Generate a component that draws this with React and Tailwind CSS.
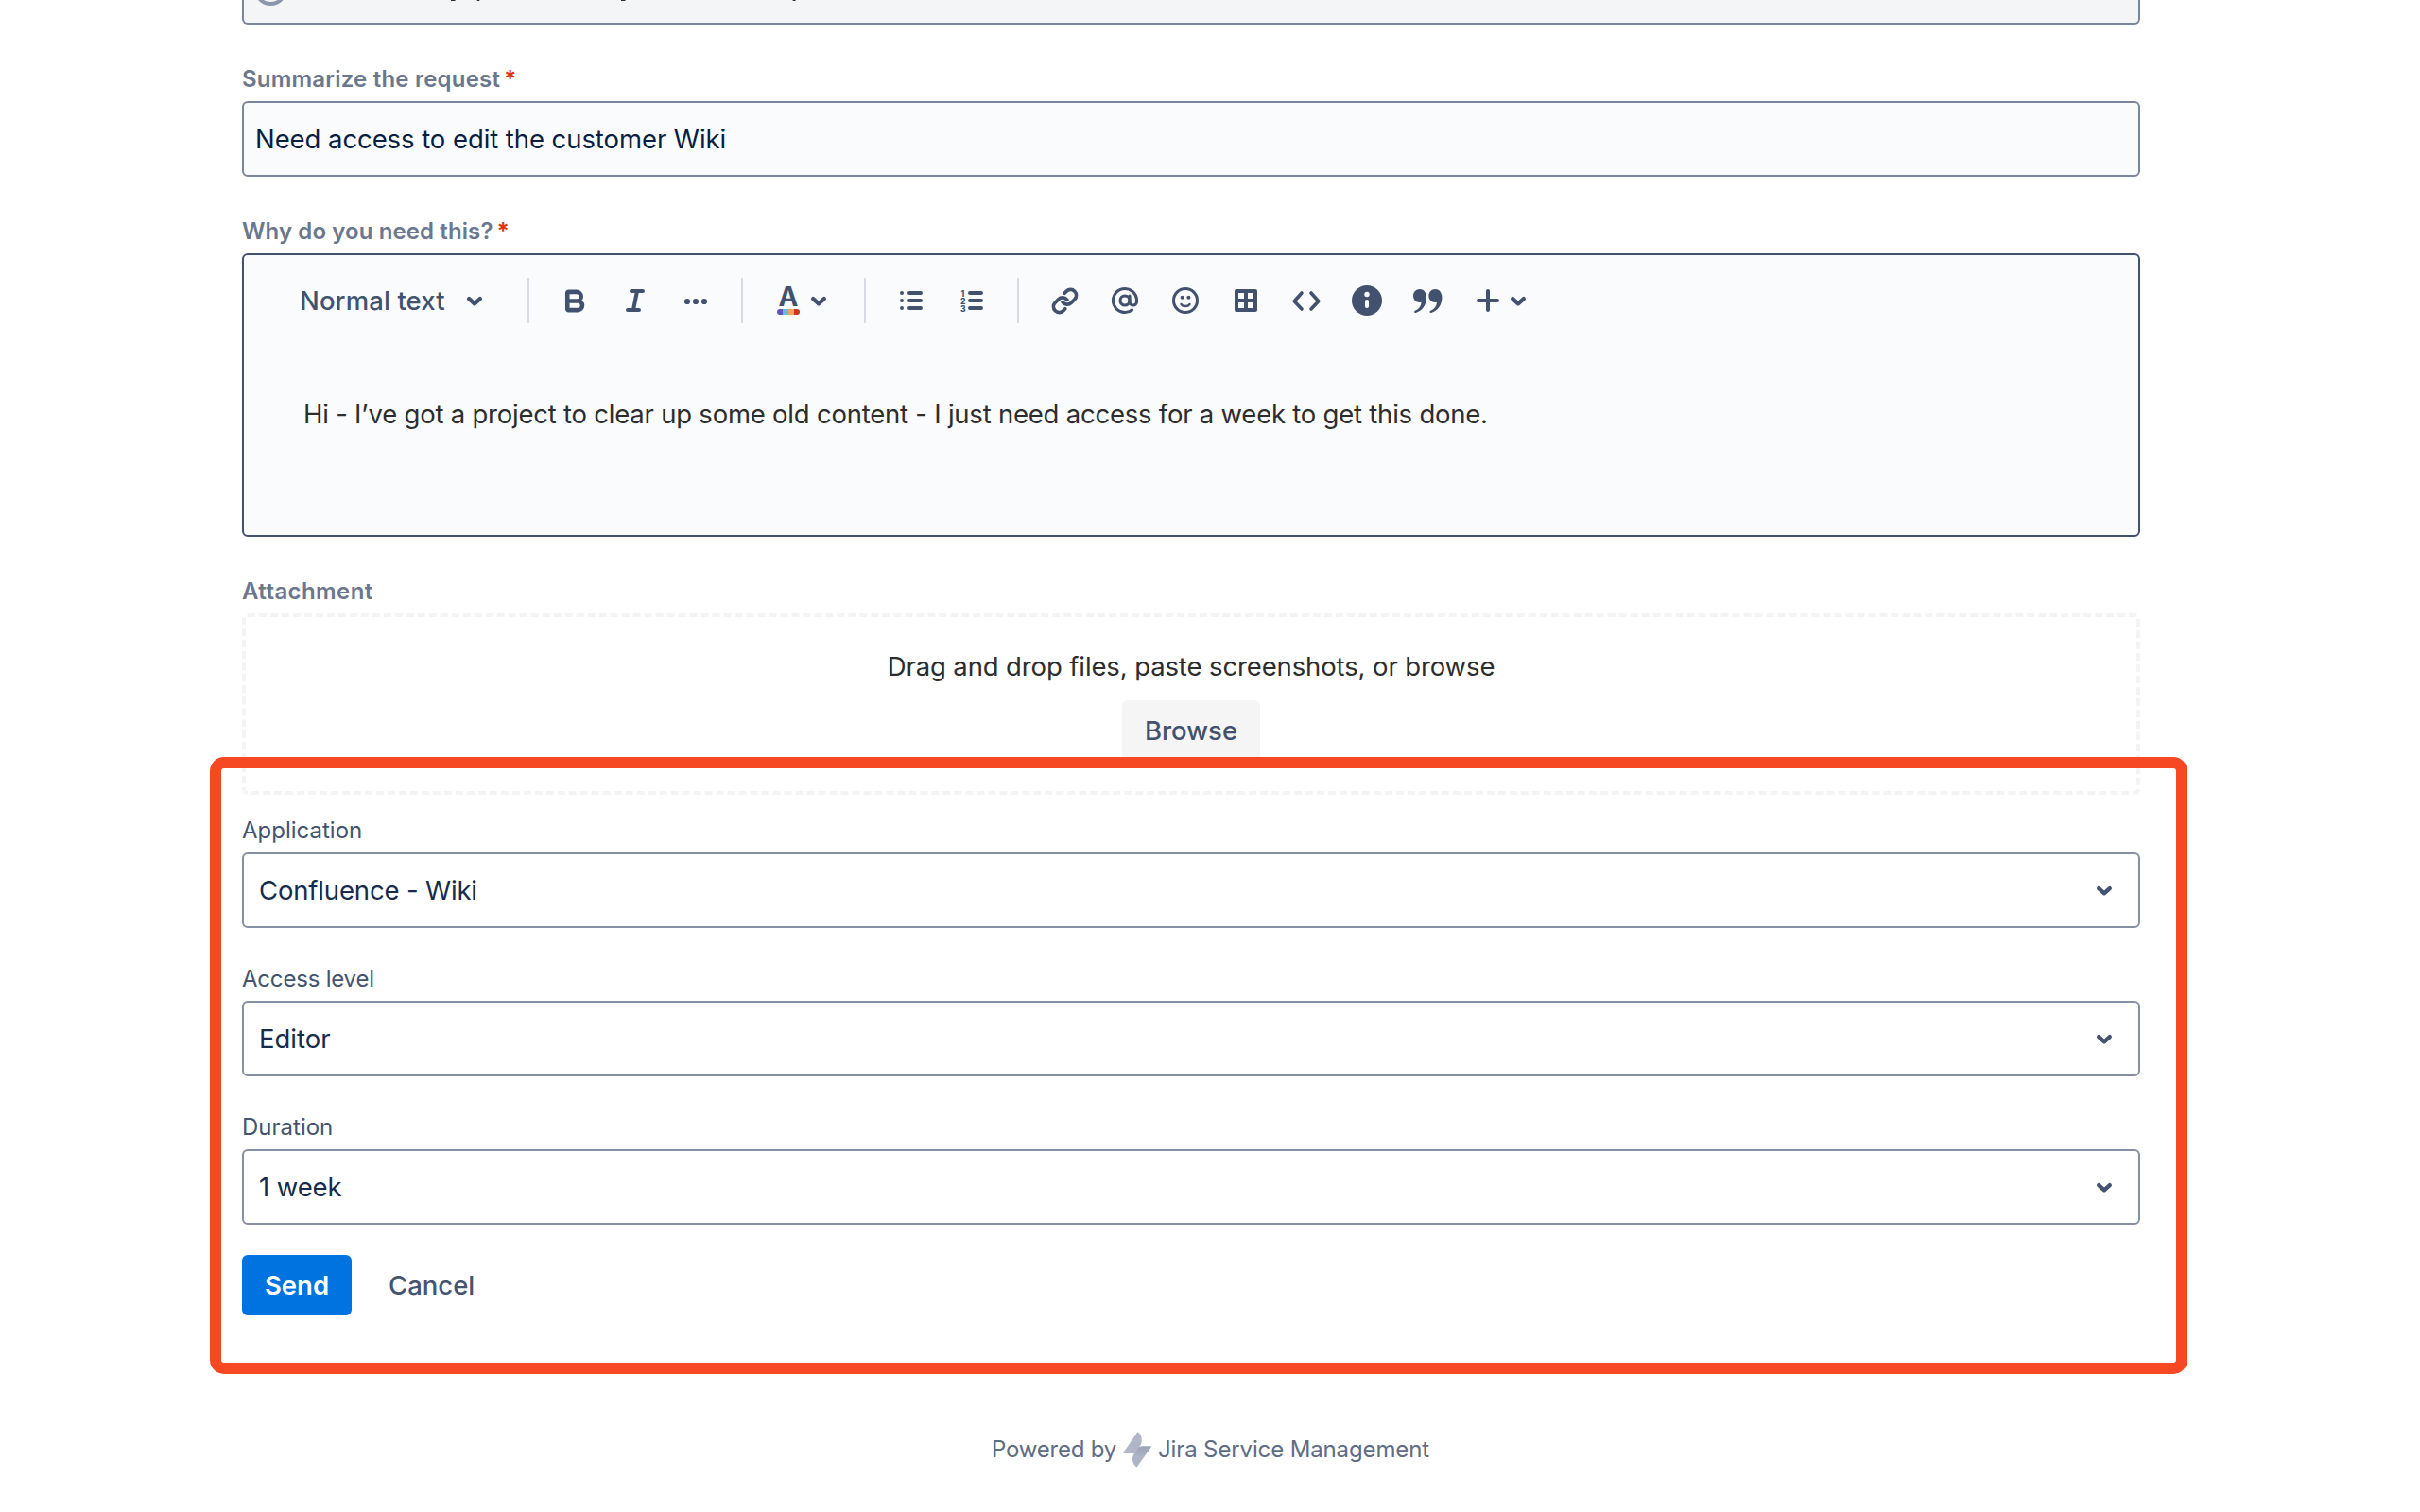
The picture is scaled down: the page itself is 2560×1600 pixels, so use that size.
import React from 'react';
import { AtSign, Bold, Link } from 'lucide-react';

const selects = [
  { label: 'Application', value: 'Confluence - Wiki', className: 'pt-5', labelClass: '', valueClass: 'tracking-[-0.16px]' },
  { label: 'Access level', value: 'Editor', className: 'pt-9', labelClass: 'tracking-[-0.2px]', valueClass: '' },
  { label: 'Duration', value: '1 week', className: 'pt-9', labelClass: '', valueClass: 'tracking-[-0.1px]' },
];

const Chevron = () => (
  <svg className="w-8 h-8 shrink-0" viewBox="0 0 32 32" fill="none" stroke="currentColor" strokeWidth="4.4" strokeLinecap="round" strokeLinejoin="round">
    <path d="M10.2 14.2l5.8 5.1 5.8-5.1" />
  </svg>
);

const Icon = ({ children }) => (
  <svg className="w-12 h-12" viewBox="0 0 48 48" fill="none" stroke="currentColor" strokeWidth="4" strokeLinecap="round" strokeLinejoin="round">
    {children}
  </svg>
);

const Tool = ({ children }) => (
  <button className="w-16 h-16 shrink-0 flex items-center justify-center">{children}</button>
);

const Divider = () => <div className="w-0.5 h-12 mx-4 shrink-0 bg-[#d9dbe2]" />;

const FieldLabel = ({ children, required }) => (
  <label className="flex pt-[39px] pb-[5px] text-2xl leading-[37px] font-semibold text-[#6b778c]">
    {children}
    {required && <span className="ml-1 font-bold text-[#de350b]">*</span>}
  </label>
);

const Toolbar = () => (
  <div className="flex items-center h-24 pl-[46px] text-[#42526e]">
    <button className="flex items-center justify-between w-[238px] pl-[13px] pr-6 text-[27.5px] font-medium tracking-[0.1px]">
      <span className="pt-px">Normal text</span>
      <Chevron />
    </button>
    <Divider />
    <Tool><Bold className="mr-0.5" size={29} strokeWidth={3.8} /></Tool>
    <Tool>
      <Icon><path d="M20 14h12M16 34h12M26 14l-4 20" /></Icon>
    </Tool>
    <Tool>
      <Icon>
        <g fill="currentColor" stroke="none">
          <circle cx="15" cy="25" r="3.1" />
          <circle cx="24" cy="25" r="3.1" />
          <circle cx="33" cy="25" r="3.1" />
        </g>
      </Icon>
    </Tool>
    <Divider />
    <div className="flex items-center w-24">
      <Tool>
        <span className="flex flex-col items-center pt-px">
          <span className="text-[28px] leading-[20px] pb-[3px] font-bold">A</span>
          <span className="flex w-6 h-1.5 rounded-full overflow-hidden">
            <span className="flex-1 bg-[#6554c0]" />
            <span className="flex-1 bg-[#60bfdc]" />
            <span className="flex-1 bg-[#faa05f]" />
            <span className="flex-1 bg-[#ca3521]" />
          </span>
        </span>
      </Tool>
      <span className="-ml-4"><Chevron /></span>
    </div>
    <Divider />
    <Tool>
      <Icon>
        <path d="M22 16h12M22 24h12M22 32h12" />
        <path d="M14 16h.01M14 24h.01M14 32h.01" />
      </Icon>
    </Tool>
    <Tool>
      <Icon>
        <path d="M22 16h12M22 24h12M22 32h12" />
        <g fill="currentColor" stroke="none" fontSize="8.5" fontWeight="800">
          <text x="12.5" y="20">1</text>
          <text x="12" y="28">2</text>
          <text x="12" y="36">3</text>
        </g>
      </Icon>
    </Tool>
    <Divider />
    <Tool><Link size={29} strokeWidth={3.1} /></Tool>
    <Tool><AtSign size={30} strokeWidth={2.5} /></Tool>
    <Tool>
      <Icon>
        <circle cx="24" cy="24" r="12.5" strokeWidth="3" />
        <path d="M19.5 28c2 2.7 7 2.7 9 0" strokeWidth="2.4" />
        <g fill="currentColor" stroke="none">
          <circle cx="20.6" cy="20.8" r="2" />
          <circle cx="27.4" cy="20.8" r="2" />
        </g>
      </Icon>
    </Tool>
    <Tool>
      <Icon>
        <path d="M14 14h20v20H14zM24 14v20M14 24h20" />
      </Icon>
    </Tool>
    <Tool>
      <Icon>
        <path d="M19 16l-7.8 8.8 7.8 8.2M29 16l7.8 8.8-7.8 8.2" strokeWidth="3.6" />
      </Icon>
    </Tool>
    <Tool>
      <Icon>
        <circle cx="24" cy="24" r="16" fill="currentColor" stroke="none" />
        <path d="M24 25v5" stroke="#fafbfd" strokeWidth="4" />
        <circle cx="24" cy="17.500" r="2.7" fill="#fafbfd" stroke="none" />
      </Icon>
    </Tool>
    {/* closing quote marks: round head with a thin tail */}
    <Tool>
      <Icon>
        <g fill="currentColor" stroke="none">
          <path d="M15.800 12c4.200 0 7.200 3.400 7.200 8.800 0 8-4.800 14.400-11.300 16.200-1.700.5-2.300-1.500-.7-2.200 4-1.800 6.300-5 6.600-9.100-.7.200-1.300.300-2 .300-3.700 0-6.600-2.900-6.600-6.900 0-4.100 2.900-7.100 6.800-7.100z" />
          <path transform="translate(16.400 0)" d="M15.800 12c4.200 0 7.200 3.400 7.200 8.800 0 8-4.800 14.400-11.300 16.200-1.700.5-2.300-1.500-.7-2.200 4-1.800 6.300-5 6.600-9.100-.7.200-1.300.300-2 .300-3.700 0-6.600-2.900-6.600-6.900 0-4.100 2.900-7.100 6.800-7.100z" />
        </g>
      </Icon>
    </Tool>
    <div className="flex items-center w-24">
      <Tool>
        <Icon><path d="M24 14v20M14 24h20" /></Icon>
      </Tool>
      <span className="-ml-4"><Chevron /></span>
    </div>
  </div>
);

const SelectField = ({ label, value, className, labelClass, valueClass }) => (
  <div className={className}>
    <label className={`block pb-[5px] text-2xl leading-9 text-[#44546f] ${labelClass}`}>{label}</label>
    <div className="flex items-center justify-between h-20 pl-4 pr-5 border-2 border-[#8590a2] rounded-md bg-white text-[#172b4d]">
      <span className={`pt-px text-[27.5px] ${valueClass}`}>{value}</span>
      <span className="text-[#44546f]"><Chevron /></span>
    </div>
  </div>
);

const Logo = () => (
  <svg className="w-[30px] h-[38px]" viewBox="0 0 30 38">
    <defs>
      <linearGradient id="bolt" x1="0" y1="0" x2="0" y2="1">
        <stop offset="0" stopColor="#9ba4b5" />
        <stop offset="0.5" stopColor="#adb4c3" />
      </linearGradient>
    </defs>
    <path fill="#b0b6c5" d="M15 .8Q16 0 16.700 1C20 4.500 21 10 18 15l-6 8H1Q-.3 23 .6 21.700z" />
    <path fill="url(#bolt)" d="M20.500 15.300H29q1.400 0 .6 1.300L15 37q-1 .8-1.700-.4C9.500 33 9 27.500 12 23l3-4.700q2-3 5.500-3z" />
  </svg>
);

export default function App() {
  return (
    <div className="relative w-[2560px] h-[1600px] overflow-hidden bg-white font-['Inter',sans-serif]">
      <main className="w-[2008px] ml-64">
        <div className="h-[26px] overflow-hidden border-2 border-t-0 border-[#7a869a] rounded-b-md bg-[#f4f5f7]">
          <svg className="w-[600px] h-6" viewBox="258 0 600 24">
            <circle cx="286.300" cy="-12" r="16" fill="none" stroke="#8c96ab" strokeWidth="3.800" />
            <path d="M477 0h4.500v1H477zM504.700 0h2.600v1h-2.600zM657 0h4.500v1H657zM838.700 0h2.800v1h-2.800z" fill="#2d2d31" />
          </svg>
        </div>

        <FieldLabel required><span className="tracking-[0.2px]">Summarize the request</span></FieldLabel>
        <div className="flex items-center h-20 pl-3 pt-px border-2 border-[#7a869a] rounded-md bg-[#fafbfd] text-[27.5px] text-[#091e42] tracking-[-0.07px]">
          Need access to edit the customer Wiki
        </div>

        <FieldLabel required><span className="tracking-[0.1px]">Why do you need this?</span></FieldLabel>
        <div className="h-[300px] border-2 border-[#42526e] rounded-md bg-[#fafbfd]">
          <Toolbar />
          <p className="pt-[52px] pl-[63px] text-[27.5px] leading-10 text-[#2d2d2d] tracking-[-0.225px]">
            Hi - I’ve got a project to clear up some old content - I just need access for a week to get this done.
          </p>
        </div>

        <FieldLabel><span className="tracking-[0.4px]">Attachment</span></FieldLabel>
        <div className="flex flex-col items-center h-48 pt-8 border-4 border-dashed border-[#f4f4f4] rounded-md">
          <p className="text-[27.5px] leading-10 text-[#2d2d2d] tracking-[-0.12px]">
            Drag and drop files, paste screenshots, or browse
          </p>
          <button className="w-[146px] h-16 mt-4 pt-px shrink-0 rounded-md bg-[#f5f5f5] text-[27.5px] font-medium text-[#42526e]">
            Browse
          </button>
        </div>

        {selects.map((s) => (
          <SelectField key={s.label} {...s} />
        ))}

        <div className="flex items-center pt-8 text-[27.5px]">
          <button className="w-[116px] h-16 pt-px rounded-md bg-[#0073e0] font-semibold text-white">Send</button>
          <button className="h-16 ml-[39px] pt-px font-medium text-[#44546f]">Cancel</button>
        </div>
      </main>

      <footer className="flex items-center h-10 mt-[122px] ml-[1049px] text-2xl text-[#5e6c84] whitespace-nowrap">
        <span className="w-[139px] tracking-[-0.2px]">Powered by</span>
        <Logo />
        <span className="pl-[7px] tracking-[-0.13px]">Jira Service Management</span>
      </footer>

      {/* highlight around the form fields */}
      <div className="absolute left-[222px] top-[801px] w-[2092px] h-[653px] border-[12px] border-[#f54823] rounded-[15px] pointer-events-none" />
    </div>
  );
}
